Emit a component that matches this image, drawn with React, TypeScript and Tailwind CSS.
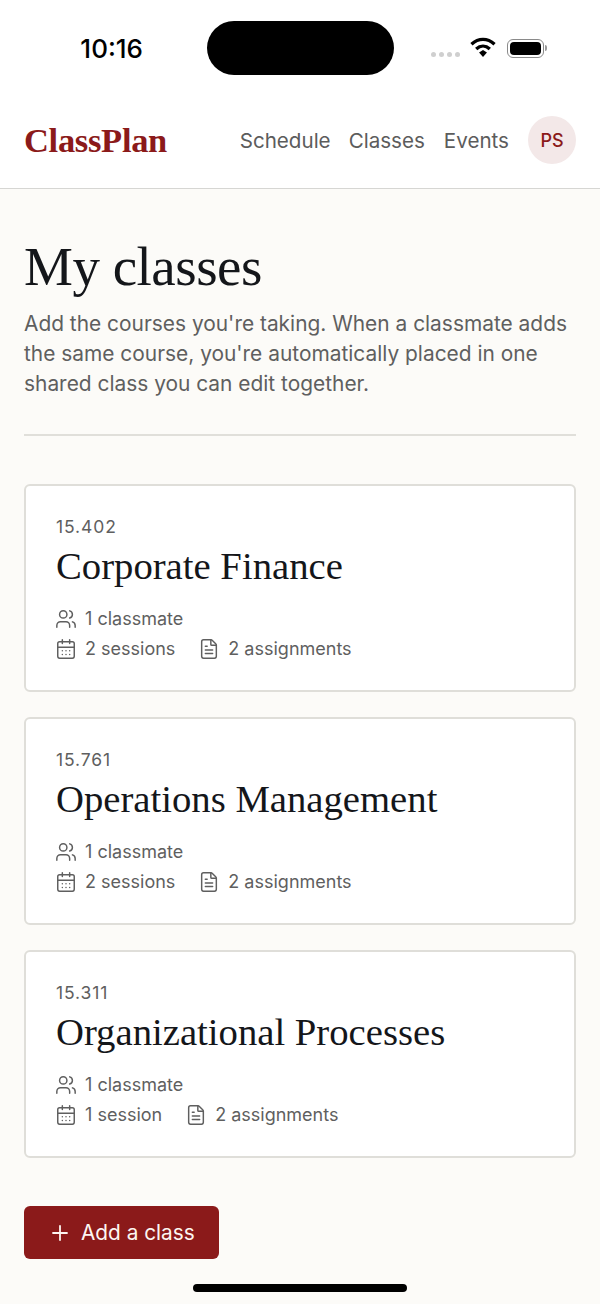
import { CalendarDays, FileText, Plus, Users } from 'lucide-react'

const courses = [
  { code: '15.402', name: 'Corporate Finance', sessions: '2 sessions' },
  { code: '15.761', name: 'Operations Management', sessions: '2 sessions' },
  { code: '15.311', name: 'Organizational Processes', sessions: '1 session' },
]

const serif = "font-['Liberation_Serif',serif]"
const sans = "font-['Inter',sans-serif]"

function StatusBar() {
  return (
    <div className="flex h-[100px] items-start pt-[21px]">
      <div className="flex h-[54px] w-[207px] items-center justify-end pr-[64px] font-['Inter',sans-serif] text-[26px] font-medium text-black">
        10:16
      </div>
      <div className="h-[54px] w-[187px] rounded-[27px] bg-black" />
      <div className="flex h-[54px] items-center pl-[37px]">
        <div className="mt-[13px] flex gap-[3px]">
          {[0, 1, 2, 3].map(i => (
            <span key={i} className="h-[5px] w-[5px] rounded-full bg-[#cfcfcf]" />
          ))}
        </div>
        <svg className="ml-[9px] mb-[2px]" width="28" height="22" viewBox="0 0 24 20" fill="none">
          <path d="M1.5 7.5C8 1.6 16 1.6 22.5 7.5" stroke="#000" strokeWidth="3" />
          <path d="M5.8 11.8C9.6 8.3 14.4 8.3 18.2 11.8" stroke="#000" strokeWidth="3" />
          <path d="M8.4 15L12 12.8L15.6 15L12 19Z" fill="#000" />
        </svg>
        <div className="ml-[10px] flex items-center">
          <div className="flex h-[19px] w-[37px] items-center justify-center rounded-[6px] border border-[#8a8a8a]">
            <div className="h-[13px] w-[31px] rounded-[4px] bg-black" />
          </div>
          <div className="ml-[1px] h-[6px] w-[2px] rounded-r-full bg-[#9a9a9a]" />
        </div>
      </div>
    </div>
  )
}

function Header() {
  return (
    <header className="flex h-[89px] items-start justify-between border-b border-[#d6d6d3] bg-white px-[24px] pt-[16px]">
      <div className={`${serif} mt-[4px] text-[34.5px] leading-[40px] font-bold tracking-[-0.3px] text-[#8b1a1a]`}>ClassPlan</div>
      <nav className={`${sans} flex items-center text-[20.6px] text-[#5c5c5c]`}>
        <span className="pt-[2px]">Schedule</span>
        <span className="ml-[18px] pt-[2px]">Classes</span>
        <span className="ml-[19px] pt-[2px]">Events</span>
        <span className="ml-[19px] flex h-[48px] w-[48px] items-center justify-center rounded-full bg-[#f3e8e8] text-[18px] font-medium text-[#8b1a1a]">
          PS
        </span>
      </nav>
    </header>
  )
}

function CourseCard({ code, name, sessions }: { code: string; name: string; sessions: string }) {
  return (
    <div className="h-[208px] rounded-[6px] border-2 border-[#dfded9] bg-white px-[30px] pt-[29px]">
      <div className={`${sans} text-[17.5px] leading-[24px] tracking-[0.9px] text-[#5f5f5f]`}>{code}</div>
      <div className={`${serif} mt-[4px] text-[38.7px] leading-[46px] text-[#14161a]`}>{name}</div>
      <div className={`${sans} mt-[18px] flex flex-col gap-[6px] text-[18px] leading-[24px] text-[#5f5f5f]`}>
        <div className="flex items-center">
          <Users size={22} strokeWidth={1.6} className="-ml-[1px]" />
          <span className="ml-[8px]">1 classmate</span>
        </div>
        <div className="flex items-center">
          <CalendarDays size={22} strokeWidth={1.6} className="-ml-[1px]" />
          <span className="ml-[8px]">{sessions}</span>
          <FileText size={22} strokeWidth={1.6} className="ml-[23px]" />
          <span className="ml-[8px]">2 assignments</span>
        </div>
      </div>
    </div>
  )
}

export default function App() {
  return (
    <div className="relative flex h-[1304px] w-[600px] flex-col overflow-hidden bg-[#fcfbf8]">
      <div className="bg-white">
        <StatusBar />
        <Header />
      </div>
      <main className="flex flex-col px-[24px] pt-[42px]">
        <h1 className={`${serif} text-[55px] leading-[72px] tracking-[-0.5px] text-[#14161a]`}>My classes</h1>
        <p className={`${sans} mt-[6px] text-[20.9px] leading-[30px] text-[#5f5f5f]`}>
          Add the courses you're taking. When a classmate adds the same course, you're automatically placed in one shared class you can edit together.
        </p>
        <div className="mt-[35px] h-[2px] bg-[#e0dfda]" />
        <div className="mt-[48px] flex flex-col gap-[25px]">
          {courses.map(c => (
            <CourseCard key={c.code} {...c} />
          ))}
        </div>
        <button className={`${sans} mt-[48px] flex h-[53px] w-[195px] items-center rounded-[6px] bg-[#8b1a1a] pl-[24px] text-[20.8px] text-[#fdf6f2]`}>
          <Plus size={24} strokeWidth={1.8} />
          <span className="ml-[9px]">Add a class</span>
        </button>
      </main>
      <div className="absolute bottom-[12px] left-[193px] h-[8px] w-[214px] rounded-full bg-black" />
    </div>
  )
}
